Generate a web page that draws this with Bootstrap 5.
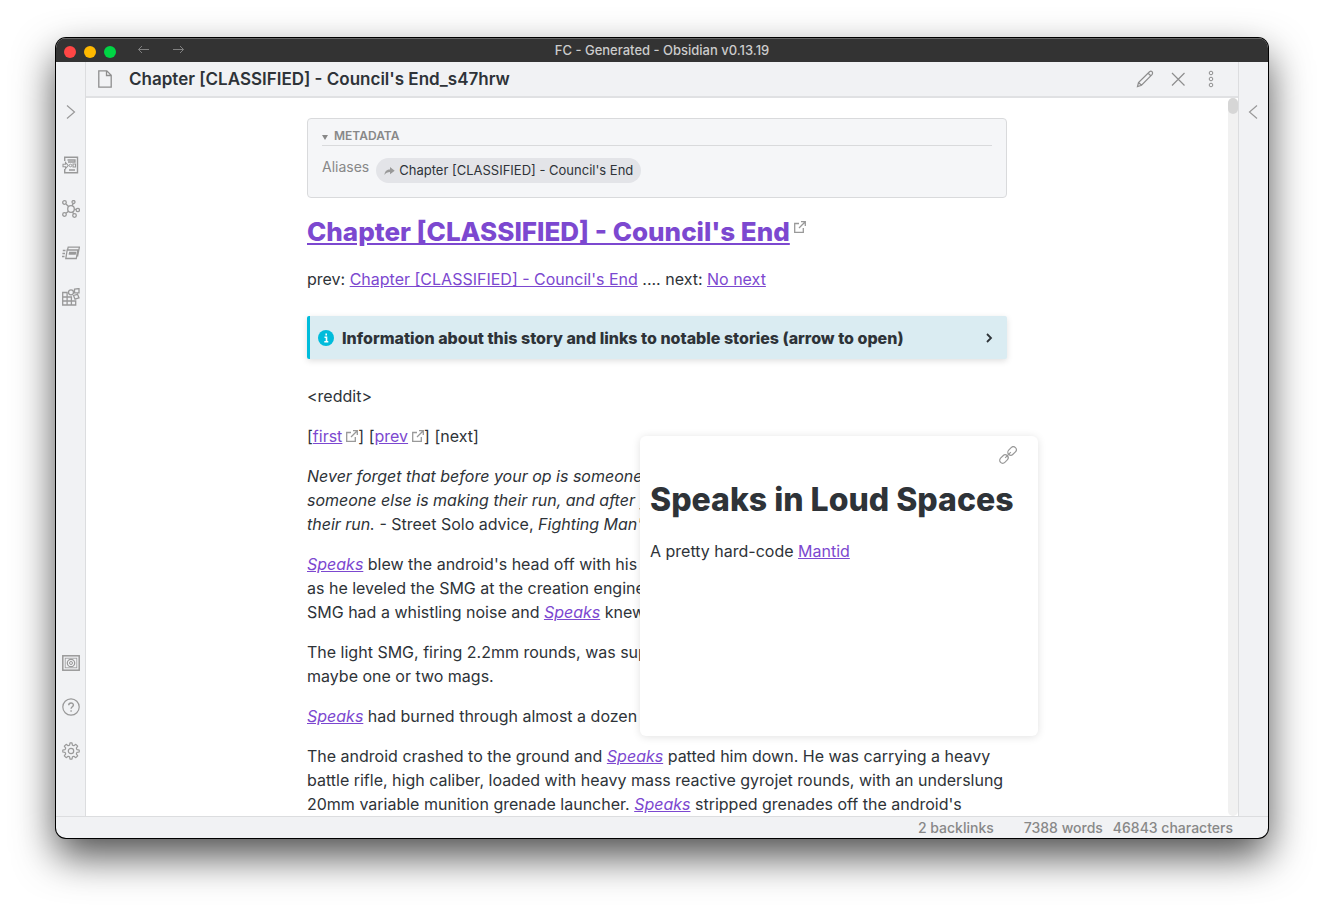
<!DOCTYPE html>
<html lang="en">
<head>
<meta charset="utf-8">
<meta name="viewport" content="width=device-width, initial-scale=1">
<title>FC - Generated - Obsidian v0.13.19</title>
<link href="https://cdn.jsdelivr.net/npm/bootstrap@5.3.0/dist/css/bootstrap.min.css" rel="stylesheet">
<style>
  :root { --ink: #2e3338; --muted: #888; --line: #dcdddf; --panel: #f1f2f4; --accent: #7c48d0; }
  body { font-family: Inter, "Liberation Sans", sans-serif; font-size: 16px; line-height: 24px; color: var(--ink); background: #fff; padding: 38px 56px 74px; }
  a, a:hover { color: var(--accent); }
  svg { display: block; fill: none; stroke: currentColor; }
  p { margin-bottom: 16px; }
  .app-window { border-radius: 10px; background: var(--panel); box-shadow: 0 0 0 1px #000, 0 18px 40px rgba(0,0,0,.7); }
  .title-bar { height: 24px; background: #333; color: #ccc; font-size: 13px; font-weight: 500; box-shadow: inset 0 1px #666; padding-left: 8px; }
  .dot { width: 12px; height: 12px; border-radius: 50%; margin-top: 4px; }
  .dot-red { background: #ff4645; } .dot-yellow { background: #ffb900; } .dot-green { background: #00d544; }
  .plain { background: none; border: 0; padding: 0; color: inherit; display: flex; align-items: center; justify-content: center; }
  .history { color: #808080; margin-left: 20px; gap: 20px; }
  .ribbon { width: 30px; color: #999; padding: 28px 0 43px; }
  .ribbon-left { border-right: 1px solid var(--line); }
  .ribbon-right { border-left: 1px solid var(--line); }
  .ribbon .plain { height: 44px; width: 100%; }
  .ribbon-main { margin-top: 9px; }
  .view-header { height: 36px; border-bottom: 2px solid #e0e1e3; color: #8e8e8e; padding: 0 18px 0 12px; }
  .view-title { font-size: 17px; line-height: 24px; font-weight: 600; color: var(--ink); margin-left: 17px; }
  .view-actions { gap: 15px; }
  .view-actions .plain { width: 18px; height: 18px; }
  .doc { background: #fff; padding-top: 20px; }
  .doc-column { width: 700px; max-width: 100%; }
  .scroll-track { width: 10px; background: #f1f1f1; border-radius: 5px; }
  .scroll-thumb { height: 16px; background: #d6d6d6; border-radius: 5px; }
  .meta-box { background: #f5f6f8; border: 1px solid #d9dadc; border-radius: 4px; height: 80px; padding: 8px 14px; color: var(--muted); }
  .meta-head { border-bottom: 1px solid #d9dadc; font-size: 12px; line-height: 18px; font-weight: 600; gap: 5px; }
  .meta-head svg { margin-top: 2px; }
  .meta-row { font-size: 14px; gap: 7px; padding-top: 12px; line-height: 18px; }
  .alias-pill, .alias-pill:hover { background: #e3e4e8; color: var(--ink); border-radius: 13px; font-size: 13px; line-height: 25px; padding: 0 8px; gap: 4px; }
  .alias-pill svg { color: #999; }
  .doc-title { font-size: 26px; line-height: 36px; font-weight: 800; margin: 16px 0 17px; }
  .ext { display: inline-block; color: #999; }
  .doc-title .ext { vertical-align: top; margin: 7px 0 0 4px; }
  .doc p .ext { vertical-align: baseline; margin-left: 4px; }
  .info-fold { background: #daecf2; border-left: 3px solid #00bcdb; border-radius: 2px; height: 43px; margin: 25px 0; padding: 0 12px 0 8px; font-weight: 800; gap: 8px; box-shadow: 0 2px 6px rgba(0,0,0,.13); list-style: none; }
  .hover-pane { left: 333px; bottom: 100%; width: 398px; height: 300px; margin-bottom: 8px; background: #fff; border-radius: 6px; box-shadow: 0 1px 8px rgba(0,0,0,.12); padding: 10px; }
  .hover-pane h2 { font-size: 32px; line-height: 40px; font-weight: 800; margin: 16px 0 19px; }
  .hover-pane .plain { color: #999; margin: 0 11px 0 auto; }
  .status-bar { height: 22px; border-top: 1px solid var(--line); font-size: 14px; line-height: 22px; font-weight: 500; color: var(--muted); padding-right: 35px; gap: 10px; }
</style>
</head>
<body class="vh-100 overflow-hidden">
<svg width="0" height="0" class="position-absolute" aria-hidden="true">
  <symbol id="ext" viewBox="0 0 12 12"><path d="M5 2.500H.700v8.800h8.600V7M7 .7h4.300V5M11 1 5 7" stroke-width="1.300"/></symbol>
</svg>
<div class="app-window h-100 d-flex flex-column overflow-hidden">
  <header class="title-bar d-flex flex-shrink-0 align-items-center position-relative">
    <div class="d-flex gap-2"><span class="dot dot-red"></span><span class="dot dot-yellow"></span><span class="dot dot-green"></span></div>
    <div class="history d-flex">
      <button class="plain" aria-label="Back"><svg width="15" height="12" viewBox="0 0 15 12"><path d="M13 5.500H2.500M6 2 2.500 5.500 6 9"/></svg></button>
      <button class="plain" aria-label="Forward"><svg width="15" height="12" viewBox="0 0 15 12"><path d="M2 5.500h10.500M9 2l3.500 3.500L9 9"/></svg></button>
    </div>
    <div class="position-absolute start-0 end-0 text-center pe-none">FC - Generated - Obsidian v0.13.19</div>
  </header>

  <div class="d-flex flex-grow-1 overflow-hidden">
    <nav class="ribbon ribbon-left d-flex flex-column flex-shrink-0" aria-label="Ribbon">
      <button class="plain" aria-label="Expand"><svg width="18" height="18"><path d="m5 2.500 7.500 6.500L5 15.500" stroke-width="1.200"/></svg></button>
      <div class="ribbon-main">
        <button class="plain" aria-label="Quick switcher"><svg width="18" height="18"><path d="M2.700 5V1.200h12.800v15.600H2.700V13" stroke-width="1.400"/><path d="M5.500 4h7.500v2H6M7 14h6" stroke-width="1.300"/><path d="M1 8.200h2.500V6.500L6.200 9.500l-2.700 3v-1.700H1zM11 8h2.500v3H11z" stroke-width="1.100"/><circle cx="8.500" cy="9.500" r="1.300"/></svg></button>
        <button class="plain" aria-label="Graph view"><svg width="18" height="18"><g stroke-width="1.300"><circle cx="9" cy="9" r="3.300"/><circle cx="2.500" cy="2.500" r="1.800"/><circle cx="11.500" cy="2" r="1.500"/><circle cx="15.800" cy="10" r="1.700"/><circle cx="2.500" cy="14.500" r="1.800"/><circle cx="12.500" cy="15.500" r="1.800"/><path d="m4 4 2.500 2.500M10 5.700l1-2M12.300 9.300h1.700M4 13.200l2.500-2M10.500 12l1.200 1.800"/></g></svg></button>
        <button class="plain" aria-label="Review cards"><svg width="18" height="18"><path d="M5.200 6h10.600l-1.500 8.500H3.800zM5.500 6l.7-2.800h11.200L15.500 12.500M7 8.500h6.500l-.3 1.500H6.700M.8 6.500h2.700M.4 9.500h2.600M0 12.500h2.500" stroke-width="1.300"/></svg></button>
        <button class="plain" aria-label="Templates"><svg width="18" height="18"><path d="M.7 4.500h4.400V17H.7zM.7 9h8.700v8M.7 13h13v4H.7M12.500 1.200l4.500-.7v4.300h-4.500zM11.500 7.500l4-1.200 1.500 3.500-4 1.400z" stroke-width="1.300"/><circle cx="9" cy="4.300" r="2.500" stroke-width="1.300"/></svg></button>
      </div>
      <div class="mt-auto">
        <button class="plain" aria-label="Open vault"><svg width="18" height="18"><rect x=".8" y="1.800" width="16.400" height="14.400" stroke-width="1.500"/><rect x="3.200" y="4.200" width="11.600" height="9.600" stroke-width=".8"/><circle cx="9" cy="9" r="3.700" stroke-width="1.200"/><circle cx="9" cy="9" r="1.500"/></svg></button>
        <button class="plain" aria-label="Help"><svg width="18" height="18"><circle cx="9" cy="9" r="8.200" stroke-width="1.200"/><path d="M6.700 7.300c0-3.200 4.700-3 4.700-.3 0 1.800-2.300 1.700-2.300 3.800M9.100 12.200v1.600" stroke-width="1.400"/></svg></button>
        <button class="plain" aria-label="Settings"><svg width="18" height="18"><path d="M7.600 3.100 8 .8h2l.4 2.300 1.500.6 1.900-1.400 1.900 1.900-1.400 1.900.6 1.500 2.300.4v2l-2.300.4-.6 1.500 1.400 1.900-1.900 1.900-1.900-1.400-1.500.6-.4 2.300H8l-.4-2.300-1.500-.6-1.900 1.400-1.900-1.900 1.400-1.900-.6-1.500L.8 10V8l2.300-.4.6-1.500-1.400-1.900 1.900-1.900 1.900 1.400z" stroke-width="1.200" stroke-linejoin="round"/><circle cx="9" cy="9" r="2.700" stroke-width="1.200"/></svg></button>
      </div>
    </nav>

    <main class="d-flex flex-column flex-grow-1 overflow-hidden">
      <div class="view-header d-flex align-items-center flex-shrink-0">
        <svg width="14" height="18"><path d="M.8.800h8l4.400 4.400v12H.8zM8.500 1v4.500H13" stroke-width="1.300"/></svg>
        <h1 class="view-title mb-0">Chapter [CLASSIFIED] - Council's End_s47hrw</h1>
        <div class="view-actions d-flex ms-auto">
          <button class="plain" aria-label="Edit"><svg width="18" height="18"><path d="m1.500 16.500 1-4L13.500 1.700q1.500-1 2.500 0t.2 2.600L5.500 15.200zM2.500 12.500l3 2.700M12 3l3 3" stroke-width="1.200"/></svg></button>
          <button class="plain" aria-label="Close"><svg width="18" height="18"><path d="m3 3 12.500 12.500M15.500 3 3 15.500" stroke-width="1.200"/></svg></button>
          <button class="plain" aria-label="More options"><svg width="18" height="18"><circle cx="9" cy="3" r="1.800"/><circle cx="9" cy="9" r="1.800"/><circle cx="9" cy="15" r="1.800"/></svg></button>
        </div>
      </div>
      <div class="d-flex flex-grow-1 overflow-hidden bg-white">
        <article class="doc flex-grow-1">
          <div class="doc-column mx-auto">
            <section class="meta-box">
              <div class="meta-head d-flex align-items-center"><svg width="7" height="6"><path d="M0 1h6L3 6z" fill="currentColor" stroke="none"/></svg>METADATA</div>
              <div class="meta-row d-flex align-items-start">
                <span>Aliases</span>
                <a href="#" class="alias-pill d-flex align-items-center text-decoration-none"><svg width="11" height="10"><path d="M.5 9C.8 5 3 3.500 6 3.500V1l4.700 3.800L6 8.300V6C3.500 6 2 6.800.5 9z" fill="currentColor" stroke="none"/></svg>Chapter [CLASSIFIED] - Council's End</a>
              </div>
            </section>
            <h2 class="doc-title"><a href="#">Chapter [CLASSIFIED] - Council's End</a><svg class="ext" width="12" height="12"><use href="#ext"/></svg></h2>
            <p>prev: <a href="#">Chapter [CLASSIFIED] - Council's End</a> .... next: <a href="#">No next</a></p>
            <details>
              <summary class="info-fold d-flex align-items-center">
                <svg width="16" height="16"><circle cx="8" cy="8" r="8" fill="#00bcdb" stroke="none"/><path d="M8.200 3.500v2M6.500 7.300h2v4M6.300 11.700h4" stroke="#fff" stroke-width="1.600"/></svg>
                <span>Information about this story and links to notable stories (arrow to open)</span>
                <svg class="ms-auto" width="12" height="12"><path d="m4 2 4 4-4 4" stroke-width="1.800"/></svg>
              </summary>
            </details>
            <p>&lt;reddit&gt;</p>
            <p>[<a href="#">first</a><svg class="ext" width="12" height="12"><use href="#ext"/></svg>] [<a href="#">prev</a><svg class="ext" width="12" height="12"><use href="#ext"/></svg>] [next]</p>
            <p><em>Never forget that before your op is someone<br>someone else is making their run, and after you<br>their run.</em> - Street Solo advice, <em>Fighting Man's</em></p>
            <p><a href="#"><em>Speaks</em></a> blew the android's head off with his<br>as he leveled the SMG at the creation engine<br>SMG had a whistling noise and <a href="#"><em>Speaks</em></a> knew</p>
            <p>The light SMG, firing 2.2mm rounds, was supposed<br>maybe one or two mags.</p>
            <p><a href="#"><em>Speaks</em></a> had burned through almost a dozen</p>
            <div class="position-relative">
              <p>The android crashed to the ground and <a href="#"><em>Speaks</em></a> patted him down. He was carrying a heavy<br>battle rifle, high caliber, loaded with heavy mass reactive gyrojet rounds, with an underslung<br>20mm variable munition grenade launcher. <a href="#"><em>Speaks</em></a> stripped grenades off the android's</p>
              <aside class="hover-pane position-absolute">
                <button class="plain" aria-label="Open link"><svg width="18" height="18"><g transform="rotate(-45 9 9)" stroke-width="1.200"><rect x="-1.500" y="6" width="9.500" height="6" rx="3"/><rect x="10" y="6" width="9.500" height="6" rx="3"/><path d="M5 9h8"/></g></svg></button>
                <h2>Speaks in Loud Spaces</h2>
                <p>A pretty hard-code <a href="#">Mantid</a></p>
              </aside>
            </div>
          </div>
        </article>
        <div class="scroll-track flex-shrink-0"><div class="scroll-thumb"></div></div>
      </div>
    </main>

    <div class="ribbon ribbon-right flex-shrink-0">
      <button class="plain" aria-label="Expand right sidebar"><svg width="18" height="18"><path d="M12 2.500 4.500 9l7.500 6.500" stroke-width="1.200"/></svg></button>
    </div>
  </div>

  <footer class="status-bar d-flex justify-content-end flex-shrink-0">
    <span class="me-3 pe-1">2 backlinks</span><span>7388 words</span><span>46843 characters</span>
  </footer>
</div>
<script src="https://cdn.jsdelivr.net/npm/bootstrap@5.3.0/dist/js/bootstrap.bundle.min.js"></script>
</body>
</html>
